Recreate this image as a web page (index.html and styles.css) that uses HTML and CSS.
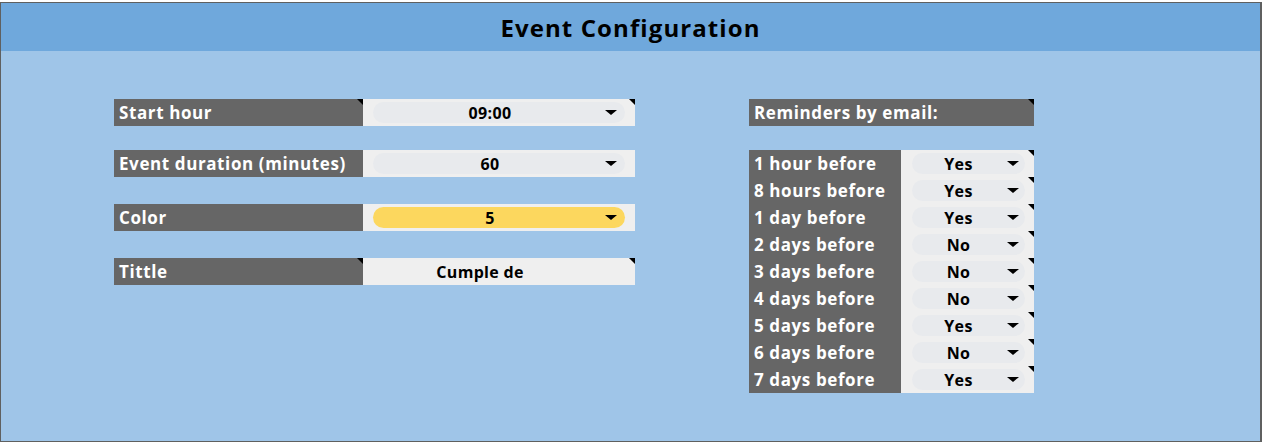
FILE: index.html
```html
<!DOCTYPE html>
<html>
<head>
<meta charset="utf-8">
<link rel="stylesheet" href="styles.css">
</head>
<body>
<div class="frame">
  <header class="head">Event Configuration</header>
  <main class="content">
    <section class="left">
      <div class="row">
        <div class="label mark">Start hour</div>
        <div class="value mark"><div class="chip"><span>09:00</span><i class="arrow"></i></div></div>
      </div>
      <div class="row">
        <div class="label">Event duration (minutes)</div>
        <div class="value"><div class="chip"><span>60</span><i class="arrow"></i></div></div>
      </div>
      <div class="row gap2">
        <div class="label">Color</div>
        <div class="value"><div class="chip yellow"><span>5</span><i class="arrow"></i></div></div>
      </div>
      <div class="row">
        <div class="label mark">Tittle</div>
        <div class="value mark"><span class="plain">Cumple de</span></div>
      </div>
    </section>
    <section class="right">
      <div class="rem-head mark">Reminders by email:</div>
      <div class="rem-list">
        <div class="rrow"><div class="rlabel">1 hour before</div><div class="rvalue mark"><div class="chip"><span>Yes</span><i class="arrow"></i></div></div></div>
        <div class="rrow"><div class="rlabel">8 hours before</div><div class="rvalue mark"><div class="chip"><span>Yes</span><i class="arrow"></i></div></div></div>
        <div class="rrow"><div class="rlabel">1 day before</div><div class="rvalue mark"><div class="chip"><span>Yes</span><i class="arrow"></i></div></div></div>
        <div class="rrow"><div class="rlabel">2 days before</div><div class="rvalue mark"><div class="chip"><span>No</span><i class="arrow"></i></div></div></div>
        <div class="rrow"><div class="rlabel">3 days before</div><div class="rvalue mark"><div class="chip"><span>No</span><i class="arrow"></i></div></div></div>
        <div class="rrow"><div class="rlabel">4 days before</div><div class="rvalue mark"><div class="chip"><span>No</span><i class="arrow"></i></div></div></div>
        <div class="rrow"><div class="rlabel">5 days before</div><div class="rvalue mark"><div class="chip"><span>Yes</span><i class="arrow"></i></div></div></div>
        <div class="rrow"><div class="rlabel">6 days before</div><div class="rvalue mark"><div class="chip"><span>No</span><i class="arrow"></i></div></div></div>
        <div class="rrow"><div class="rlabel">7 days before</div><div class="rvalue mark"><div class="chip"><span>Yes</span><i class="arrow"></i></div></div></div>
      </div>
    </section>
  </main>
</div>
</body>
</html>
```

FILE: styles.css
```css
* { box-sizing: border-box; }
html, body { margin: 0; padding: 0; background: #ffffff; }
body { width: 1262px; height: 442px; padding-top: 2px; font-family: "Open Sans", "Noto Sans", sans-serif; }

.frame {
  width: 1262px;
  height: 440px;
  border: 1.5px solid #5f6060;
  border-right-width: 2px;
  background: #9fc5e8;
  display: flex;
  flex-direction: column;
}

.head {
  height: 48px;
  background: #6fa8dc;
  color: #000;
  font-weight: 700;
  font-size: 24px;
  letter-spacing: 1.1px;
  display: flex;
  align-items: center;
  justify-content: center;
}

.content {
  display: flex;
  padding-top: 48px;
  padding-left: 113px;
}

.left { width: 521px; display: flex; flex-direction: column; }
.row { display: flex; height: 27px; margin-bottom: 24px; }
.row.gap2 { margin-bottom: 27px; }
.row:nth-child(2) { margin-bottom: 27px; }

.label, .rem-head, .rlabel {
  background: #666666;
  color: #fff;
  font-weight: 700;
  font-size: 17px;
  padding-left: 5px;
  display: flex;
  align-items: center;
  letter-spacing: 0.6px;
  white-space: nowrap;
}
.label { width: 249px; }
.value {
  width: 272px;
  background: #efefef;
  display: flex;
  align-items: center;
  padding: 0 10px;
}

.mark { position: relative; }
.mark::after {
  content: "";
  position: absolute;
  top: 0;
  right: 0;
  border-top: 6px solid #000;
  border-left: 6px solid transparent;
}

.chip {
  flex: 1;
  height: 21px;
  border-radius: 11px;
  background: #e8eaed;
  display: flex;
  align-items: center;
  padding-right: 8px;
  color: #000;
  font-weight: 700;
  font-size: 16px;
  letter-spacing: 0.4px;
}
.chip span { flex: 1; text-align: center; }
.value .chip span { padding-left: 8px; }
.chip.yellow { background: #fcd75e; }
.arrow {
  width: 0; height: 0;
  border-left: 6px solid transparent;
  border-right: 6px solid transparent;
  border-top: 5px solid #000;
  margin-left: 6px;
}
.plain {
  flex: 1;
  text-align: center;
  padding-right: 38px;
  color: #000;
  font-weight: 700;
  font-size: 16px;
  letter-spacing: 0.3px;
}

.right { margin-left: 114px; width: 285px; display: flex; flex-direction: column; }
.rem-head {
  height: 27px;
  margin-bottom: 24px;
}
.rem-list { display: flex; flex-direction: column; }
.rrow { display: flex; height: 27px; }
.rlabel { width: 152px; }
.rvalue {
  width: 133px;
  background: #efefef;
  display: flex;
  align-items: center;
  padding: 0 9px 0 11px;
}
.rvalue .chip { padding-right: 6px; }
.rvalue .chip span { padding-left: 4px; }
```
